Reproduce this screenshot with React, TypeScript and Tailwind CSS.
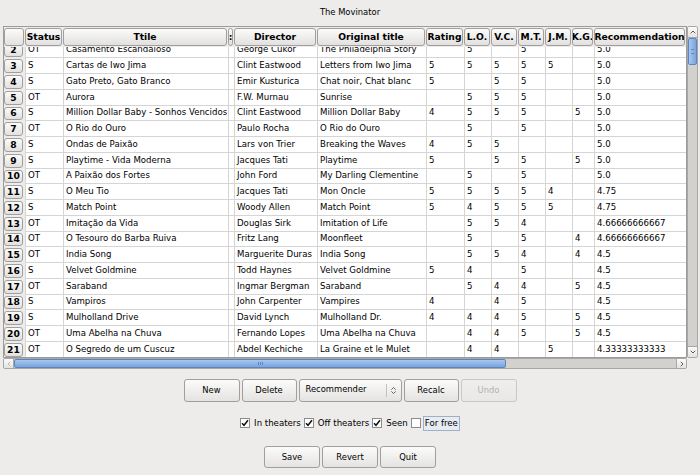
import { ChevronUp, ChevronDown, ChevronLeft, ChevronRight, ChevronsUpDown } from "lucide-react"

const columns = [
  { label: "Status", w: "w-[38px]" },
  { label: "Ttile", w: "w-[165px]" },
  { label: ":", w: "w-[6px]" },
  { label: "Director", w: "w-[83px]" },
  { label: "Original title", w: "w-[109px]" },
  { label: "Rating", w: "w-[38px]" },
  { label: "L.O.", w: "w-[27px]" },
  { label: "V.C.", w: "w-[27px]" },
  { label: "M.T.", w: "w-[27px]" },
  { label: "J.M.", w: "w-[27px]" },
  { label: "K.G.", w: "w-[22px]" },
  { label: "Recommendation", w: "w-[92px]" },
]

const rows: string[][] = [
  ["2", "OT", "Casamento Escandaloso", "", "George Cukor", "The Philadelphia Story", "", "5", "", "5", "", "", "5.0"],
  ["3", "S", "Cartas de Iwo Jima", "", "Clint Eastwood", "Letters from Iwo Jima", "5", "5", "5", "5", "5", "", "5.0"],
  ["4", "S", "Gato Preto, Gato Branco", "", "Emir Kusturica", "Chat noir, Chat blanc", "5", "", "5", "5", "", "", "5.0"],
  ["5", "OT", "Aurora", "", "F.W. Murnau", "Sunrise", "", "5", "5", "5", "", "", "5.0"],
  ["6", "S", "Million Dollar Baby - Sonhos Vencidos", "", "Clint Eastwood", "Million Dollar Baby", "4", "5", "5", "5", "", "5", "5.0"],
  ["7", "OT", "O Rio do Ouro", "", "Paulo Rocha", "O Rio do Ouro", "", "5", "", "5", "", "", "5.0"],
  ["8", "S", "Ondas de Paixão", "", "Lars von Trier", "Breaking the Waves", "4", "5", "5", "", "", "", "5.0"],
  ["9", "S", "Playtime - Vida Moderna", "", "Jacques Tati", "Playtime", "5", "", "5", "5", "", "5", "5.0"],
  ["10", "OT", "A Paixão dos Fortes", "", "John Ford", "My Darling Clementine", "", "5", "", "5", "", "", "5.0"],
  ["11", "S", "O Meu Tio", "", "Jacques Tati", "Mon Oncle", "5", "5", "5", "5", "4", "", "4.75"],
  ["12", "S", "Match Point", "", "Woody Allen", "Match Point", "5", "4", "5", "5", "5", "", "4.75"],
  ["13", "OT", "Imitação da Vida", "", "Douglas Sirk", "Imitation of Life", "", "5", "5", "4", "", "", "4.66666666667"],
  ["14", "OT", "O Tesouro do Barba Ruiva", "", "Fritz Lang", "Moonfleet", "", "5", "", "5", "", "4", "4.66666666667"],
  ["15", "OT", "India Song", "", "Marguerite Duras", "India Song", "", "5", "5", "4", "", "4", "4.5"],
  ["16", "S", "Velvet Goldmine", "", "Todd Haynes", "Velvet Goldmine", "5", "4", "", "5", "", "", "4.5"],
  ["17", "OT", "Saraband", "", "Ingmar Bergman", "Saraband", "", "5", "4", "4", "", "5", "4.5"],
  ["18", "S", "Vampiros", "", "John Carpenter", "Vampires", "4", "", "4", "5", "", "", "4.5"],
  ["19", "S", "Mulholland Drive", "", "David Lynch", "Mulholland Dr.", "4", "4", "4", "5", "", "5", "4.5"],
  ["20", "OT", "Uma Abelha na Chuva", "", "Fernando Lopes", "Uma Abelha na Chuva", "", "4", "4", "5", "", "5", "4.5"],
  ["21", "OT", "O Segredo de um Cuscuz", "", "Abdel Kechiche", "La Graine et le Mulet", "", "4", "4", "", "5", "", "4.33333333333"],
  ["", "", "", "", "", "", "", "", "", "", "", "", ""],
]

function GtkButton({ label, w, disabled }: { label: string; w: string; disabled?: boolean }) {
  return (
    <div
      className={`${w} h-full flex items-center justify-center rounded-[3px] border bg-gradient-to-b ${
        disabled
          ? "border-[#c9c8c6] from-[#efeeed] to-[#e9e8e7] text-[#b2b1af]"
          : "border-[#a09f9d] from-[#fbfbfb] to-[#e4e3e1] text-black"
      }`}
    >
      {label}
    </div>
  )
}

function CheckBox({ label, checked, focused }: { label: string; checked: boolean; focused?: boolean }) {
  return (
    <div className="flex items-center">
      <div className="w-[10px] h-[10px] border border-[#8d8c8a] bg-white flex items-center justify-center">
        {checked && (
          <svg width="8" height="8" viewBox="0 0 8 8">
            <path d="M1 4.2 L3 6.3 L7 1.3" fill="none" stroke="#111" strokeWidth="1.5" />
          </svg>
        )}
      </div>
      {focused ? (
        <span className="ml-[2px] px-[1px] leading-[13px] border border-[#9eb0c8] bg-[#e7ecf3]">{label}</span>
      ) : (
        <span className="ml-[4px] mr-[3px] leading-[13px]">{label}</span>
      )}
    </div>
  )
}

export default function App() {
  return (
    <div className="w-[700px] h-[475px] bg-[#edeceb] font-['DejaVu_Sans',sans-serif] text-[8.4px] text-black overflow-hidden">
      <div className="h-[26px] flex items-center justify-center pb-[2px]">The Movinator</div>

      <div className="ml-[3px] grid grid-cols-[684px_12px] grid-rows-[332px_11px]">
        {/* table viewport */}
        <div className="border border-[#9d9c9a] bg-white overflow-hidden flex flex-col">
          <div className="h-[20px] flex shrink-0 bg-[#edeceb] pt-[1px] pb-[1px] text-[9.2px]">
            <div className="w-[21px] pr-[1px]">
              <div className="h-full rounded-[3px] border border-[#a09f9d] bg-gradient-to-b from-[#fbfbfb] to-[#e2e1df]" />
            </div>
            {columns.map((c, i) => (
              <div key={i} className={`${c.w} shrink-0 pr-[1px]`}>
                <div className="h-full rounded-[3px] border border-[#a09f9d] bg-gradient-to-b from-[#fbfbfb] to-[#e2e1df] flex items-center justify-center font-bold overflow-hidden whitespace-nowrap">
                  {c.label}
                </div>
              </div>
            ))}
          </div>
          <div className="flex-1 overflow-hidden text-[8.6px]">
            <div className="-mt-[4.5px]">
              {rows.map((r, ri) => (
                <div key={ri} className="flex h-[15.75px]">
                  <div className="w-[21px] shrink-0 py-[1px] pr-[2px] bg-[#edeceb] text-[9.2px]">
                    <div className="h-full rounded-[3px] border border-[#a09f9d] bg-gradient-to-b from-[#fbfbfb] to-[#e2e1df] flex items-center justify-center font-bold">
                      {r[0]}
                    </div>
                  </div>
                  {columns.map((c, ci) => (
                    <div
                      key={ci}
                      className={`${c.w} shrink-0 border-l border-b border-[#d5d5d5] pl-[2px] flex items-center whitespace-nowrap overflow-hidden`}
                    >
                      {r[ci + 1]}
                    </div>
                  ))}
                </div>
              ))}
            </div>
          </div>
        </div>

        {/* vertical scrollbar */}
        <div className="w-[11px] flex flex-col border border-[#a8a7a5] rounded-[2px] bg-[#d3d1ce] overflow-hidden">
          <div className="h-[11px] shrink-0 flex items-center justify-center bg-gradient-to-b from-[#fbfbfb] to-[#e4e3e1] border-b border-[#a8a7a5]">
            <ChevronUp size={8} strokeWidth={2.5} color="#3a3a3a" />
          </div>
          <div className="h-[27px] shrink-0 rounded-[2px] border border-[#5a87c4] bg-gradient-to-r from-[#a9c7ee] to-[#7aa4dc] flex items-center justify-center">
            <div className="w-[3px] h-[5px] border-y border-[#5a87c4]" />
          </div>
          <div className="flex-1" />
          <div className="h-[11px] shrink-0 flex items-center justify-center bg-gradient-to-b from-[#fbfbfb] to-[#e4e3e1] border-t border-[#a8a7a5]">
            <ChevronDown size={8} strokeWidth={2.5} color="#3a3a3a" />
          </div>
        </div>

        {/* horizontal scrollbar */}
        <div className="h-[11px] flex border border-[#a8a7a5] rounded-[2px] bg-[#d3d1ce] overflow-hidden">
          <div className="w-[10px] shrink-0 flex items-center justify-center bg-gradient-to-b from-[#fbfbfb] to-[#e4e3e1] border-r border-[#a8a7a5]">
            <ChevronLeft size={8} strokeWidth={2.5} color="#b0b0b0" />
          </div>
          <div className="w-[492px] shrink-0 rounded-[2px] border border-[#5a87c4] bg-gradient-to-b from-[#a9c7ee] to-[#7aa4dc] flex items-center justify-center">
            <div className="w-[5px] h-[3px] border-x border-[#5a87c4] flex justify-center">
              <div className="w-[1px] h-full bg-[#5a87c4]" />
            </div>
          </div>
          <div className="flex-1" />
          <div className="w-[10px] shrink-0 flex items-center justify-center bg-gradient-to-b from-[#fbfbfb] to-[#e4e3e1] border-l border-[#a8a7a5]">
            <ChevronRight size={8} strokeWidth={2.5} color="#3a3a3a" />
          </div>
        </div>
        <div />
      </div>

      <div className="mt-[10px] h-[23px] flex justify-center gap-[2px]">
        <GtkButton label="New" w="w-[56px]" />
        <GtkButton label="Delete" w="w-[55px]" />
        <div className="w-[103px] h-full flex items-center rounded-[3px] border border-[#a09f9d] bg-gradient-to-b from-[#fbfbfb] to-[#e4e3e1]">
          <span className="flex-1 pl-[6px] pb-[2px]">Recommender</span>
          <div className="w-[1px] h-[13px] bg-[#c2c1bf]" />
          <div className="w-[14px] flex items-center justify-center">
            <ChevronsUpDown size={9} strokeWidth={2} color="#3a3a3a" />
          </div>
        </div>
        <GtkButton label="Recalc" w="w-[55px]" />
        <GtkButton label="Undo" w="w-[56px]" disabled />
      </div>

      <div className="mt-[14px] h-[14px] flex justify-center items-center text-[8.6px]">
        <CheckBox label="In theaters" checked />
        <CheckBox label="Off theaters" checked />
        <CheckBox label="Seen" checked />
        <CheckBox label="For free" checked={false} focused />
      </div>

      <div className="mt-[16px] h-[22px] flex justify-center gap-[2px]">
        <GtkButton label="Save" w="w-[56px]" />
        <GtkButton label="Revert" w="w-[56px]" />
        <GtkButton label="Quit" w="w-[56px]" />
      </div>
    </div>
  )
}
